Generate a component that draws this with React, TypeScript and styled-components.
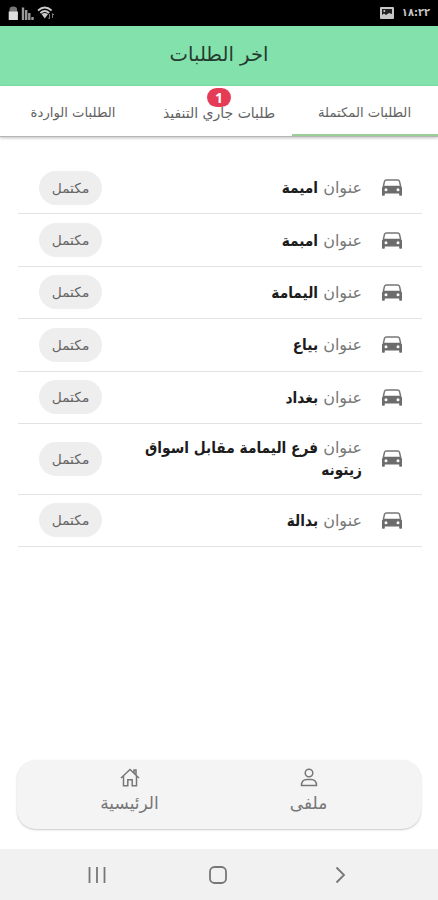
import React from 'react';
import styled, { createGlobalStyle } from 'styled-components';

const Global = createGlobalStyle`
  * { box-sizing: border-box; }
  body { margin: 0; background: #fff; }
`;

const Screen = styled.div`
  width: 438px;
  height: 900px;
  overflow: hidden;
  display: flex;
  flex-direction: column;
  direction: rtl;
  background: #fff;
  color: #666;
  font-family: 'DejaVu Sans', sans-serif;
`;

const StatusBar = styled.div`
  height: 26px;
  padding: 0 8px;
  display: flex;
  align-items: center;
  justify-content: space-between;
  background: #000;
  color: #c4c4c4;
`;

const StatusGroup = styled.div`
  display: flex;
  align-items: center;
  gap: 8px;
  direction: ltr;
`;

const Clock = styled.span`
  font: 700 11px/26px 'DejaVu Sans Condensed', 'DejaVu Sans', sans-serif;
  font-stretch: condensed;
`;

const Header = styled.header`
  height: 60px;
  padding-bottom: 3px;
  display: flex;
  align-items: center;
  justify-content: center;
  background: #83e2ac;
`;

const Title = styled.h1`
  margin: 0;
  font-size: 19.6px;
  font-weight: 400;
  line-height: 30px;
  color: #263b30;
`;

const Tabs = styled.nav`
  height: 51px;
  display: grid;
  grid-template-columns: repeat(3, 1fr);
  border-bottom: 1px solid #b5b5b5;
  box-shadow: 0 1px 3px rgba(0, 0, 0, 0.25);
`;

const Tab = styled.div<{ $active?: boolean; $size?: number }>`
  position: relative;
  padding-top: 5px;
  padding-right: ${(p) => (p.$active ? '1px' : '0')};
  display: flex;
  align-items: center;
  justify-content: center;
  font-size: ${(p) => p.$size ?? 13.2}px;
  line-height: 20px;
  white-space: nowrap;
  color: #626262;
  border-bottom: 2px solid ${(p) => (p.$active ? '#9bcf98' : 'transparent')};
`;

const Badge = styled.span`
  position: absolute;
  top: 2px;
  left: 61px;
  width: 24px;
  height: 19px;
  border-radius: 10px;
  background: #e63b57;
  color: #fff;
  font: 700 14px/19px 'Noto Sans', sans-serif;
  text-align: center;
`;

const List = styled.main`
  flex: 1;
  padding: 25px 16px 0 18px;
`;

const Row = styled.div<{ $tall?: boolean }>`
  height: ${(p) => (p.$tall ? '70.6px' : '52.4px')};
  padding: 0 20px 0 21px;
  display: flex;
  align-items: center;
  border-bottom: 1px solid #e2e2e2;
`;

const Address = styled.div`
  flex: 1;
  margin-right: 20px;
  padding-top: 1px;
  font-size: 16px;
  line-height: 22px;
  color: #777;
`;

const Place = styled.b`
  color: #1c1c1c;
  font-family: 'DejaVu Sans Condensed', 'DejaVu Sans', sans-serif;
  font-stretch: condensed;
  font-size: 15.3px;
`;

const Chip = styled.span`
  width: 63px;
  height: 34px;
  border-radius: 17px;
  background: #eee;
  color: #666;
  font-size: 13.8px;
  line-height: 35px;
  text-align: center;
`;

const Dock = styled.nav`
  height: 69px;
  margin: 0 17px 20px;
  display: grid;
  grid-template-columns: 1fr 1fr;
  border-radius: 19px;
  background: #f4f4f4;
  box-shadow: 0 1px 2px rgba(0, 0, 0, 0.22);
`;

const DockItem = styled.div<{ $pad: 'left' | 'right' }>`
  padding-top: 8px;
  padding-${(p) => p.$pad}: 23px;
  display: flex;
  flex-direction: column;
  align-items: center;
  gap: 2px;
  font-size: 17px;
  line-height: 28px;
  color: #777;
`;

const SystemBar = styled.div`
  height: 51px;
  display: flex;
  align-items: center;
  justify-content: center;
  gap: 102px;
  direction: ltr;
  background: #f1f1f1;
`;

const stroke = { fill: 'none', stroke: '#777', strokeWidth: 1.5 };

const CarIcon = () => (
  <svg width="20" height="17" viewBox="0 0 20 17">
    <path d="M1.3 7.5 2.5 2.4Q2.9.9 4.400.9h11.200q1.500 0 1.900 1.500l1.200 5.100" fill="none" stroke="#777" strokeWidth="1.500" />
    <path fill="#6c6c6c" fillRule="evenodd" d="M1.500 6.800h17L20 8.500v7.500q0 .7-.7.7h-1.400q-.7 0-.7-.7v-1.600H2.800V16q0 .7-.7.7H.7Q0 16.700 0 16V8.500ZM4 9.200a1.500 1.500 0 1 0 0 3 1.500 1.500 0 0 0 0-3Zm12 0a1.500 1.500 0 1 0 0 3 1.500 1.500 0 0 0 0-3Z" />
  </svg>
);

const StatusIcons = () => (
  <svg width="48" height="16" viewBox="0 0 48 16">
    <path d="M1.500 7V4.500Q1.500 1.500 5.300 1.500T9.100 4.500V7Z" fill="#777" />
    <path d="M.7 6.500h9.200V15H.7Z" fill="#ddd" />
    <path d="M15 2.500V15M18.200 5V15M21.300 8V15M24.500 12V15" stroke="#999" strokeWidth="2.400" />
    <path d="M30 5.500Q36.800-.5 43.600 5.500M32.400 8Q36.800 4 41.200 8" stroke="#ccc" strokeWidth="1.800" fill="none" />
    <path d="M33.500 9q3.300-2 6.600 0L36.800 13.500Z" fill="#ccc" />
    <path d="M41.500 9v5m-1.500-1.500 1.500 1.500M44.500 13V8.500l1.500 1.500" stroke="#777" fill="none" />
  </svg>
);

const PictureIcon = () => (
  <svg width="14" height="12" viewBox="0 0 14 12">
    <rect width="14" height="12" rx="1" fill="#c8c8c8" />
    <path d="M2 2h10v5L9 6 6 8 4 6.500 2 8Z" fill="#222" />
    <circle cx="4.300" cy="4" r="1" fill="#c8c8c8" />
  </svg>
);

const UserIcon = () => (
  <svg width="18" height="19" viewBox="0 0 18 19" {...stroke}>
    <circle cx="9" cy="5" r="3.800" />
    <path d="M1.500 17.500C1.500 13.500 3.500 11.500 7 11.500H11C14.500 11.500 16.500 13.500 16.500 17.500Z" />
  </svg>
);

const HomeIcon = () => (
  <svg width="20" height="19" viewBox="0 0 20 19" {...stroke}>
    <path d="M1 10 10 1.500 19 10M3.500 8v9.800h4.300v-6h4.400v6h4.300V8M14 2v3l2 2V2Z" />
  </svg>
);

const SystemIcons = () => (
  <>
    <svg width="18" height="18" viewBox="0 0 18 18" {...stroke} strokeWidth="1.800">
      <path d="M1.500 1v16M9 1v16M16.500 1v16" />
    </svg>
    <svg width="20" height="18" viewBox="0 0 20 18" {...stroke} strokeWidth="1.800">
      <rect x="2" y="1" width="16" height="16" rx="4.500" />
    </svg>
    <svg width="20" height="18" viewBox="0 0 20 18" {...stroke} strokeWidth="1.800">
      <path d="m6.500 1.500 7.500 7.500L6.500 16.500" />
    </svg>
  </>
);

const orders = ['اميمة', 'امبمة', 'اليمامة', 'بياع', 'بغداد', 'فرع اليمامة مقابل اسواق زيتونه', 'بدالة'];

export default function App() {
  return (
    <Screen>
      <Global />
      <StatusBar>
        <StatusGroup>
          <PictureIcon />
          <Clock>١٨:٢٢</Clock>
        </StatusGroup>
        <StatusGroup>
          <StatusIcons />
        </StatusGroup>
      </StatusBar>
      <Header>
        <Title>اخر الطلبات</Title>
      </Header>
      <Tabs>
        <Tab $active>الطلبات المكتملة</Tab>
        <Tab $size={14}>
          طلبات جاري التنفيذ
          <Badge>1</Badge>
        </Tab>
        <Tab>الطلبات الواردة</Tab>
      </Tabs>
      <List>
        {orders.map((place) => (
          <Row key={place} $tall={place.length > 20}>
            <CarIcon />
            <Address>
              عنوان <Place>{place}</Place>
            </Address>
            <Chip>مكتمل</Chip>
          </Row>
        ))}
      </List>
      <Dock>
        <DockItem $pad="right">
          <UserIcon />
          ملفى
        </DockItem>
        <DockItem $pad="left">
          <HomeIcon />
          الرئيسية
        </DockItem>
      </Dock>
      <SystemBar>
        <SystemIcons />
      </SystemBar>
    </Screen>
  );
}
